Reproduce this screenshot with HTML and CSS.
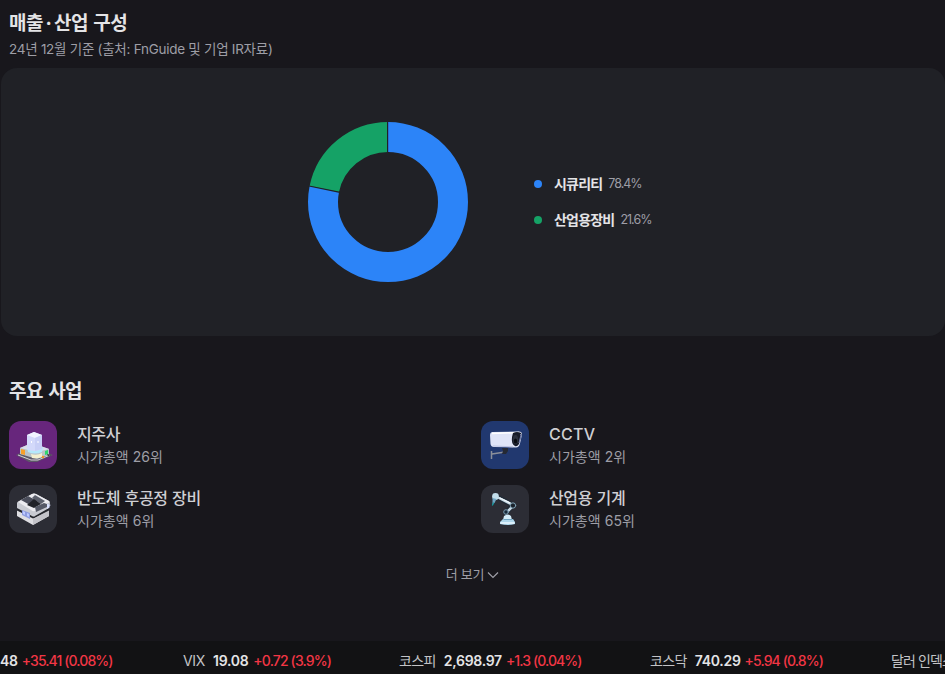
FILE: index.html
```html
<!DOCTYPE html>
<html lang="ko">
<head>
    <meta charset="UTF-8">
    <meta name="viewport" content="width=device-width, initial-scale=1.0">
    <title>매출·산업 구성</title>
    <link rel="stylesheet" href="styles.css">
</head>
<body>
<main>
    <section>
        <h2 class="title title-sales">매출<span class="mid">·</span>산업 구성</h2>
        <p class="source">24년 12월 기준 (출처: FnGuide 및 기업 IR자료)</p>
        <div class="chart-card">
            <svg class="donut" viewBox="0 0 160 160" width="160" height="160">
                <g fill="none" stroke-width="30" transform="rotate(-90 80 80)">
                    <circle cx="80" cy="80" r="65" stroke="#2c84f8" pathLength="1000" stroke-dasharray="782 218"/>
                    <circle cx="80" cy="80" r="65" stroke="#15a266" pathLength="1000" stroke-dasharray="218 782" stroke-dashoffset="-782"/>
                </g>
                <path d="M79.600 0v31M1 64l31 6.400" stroke="#202127" stroke-width="1.200"/>
            </svg>
            <ul class="legend">
                <li><i class="dot blue"></i><b>시큐리티</b><span>78.4%</span></li>
                <li><i class="dot green"></i><b>산업용장비</b><span>21.6%</span></li>
            </ul>
        </div>
    </section>

    <section class="business">
        <h2 class="title title-business">주요 사업</h2>
        <ul class="grid">
            <li class="item">
                <div class="icon purple">
                    <svg viewBox="0 0 48 48" width="48" height="48">
                        <path d="M7 34l17-8 20 8-16 7h-8z" fill="#5d5968"/>
                        <path d="M9 34l13 5h7l12-5" fill="none" stroke="#d4d0d6"/>
                        <path d="M11 27l12-5 17 6v6l-12 4-17-5z" fill="#b9c3c8"/>
                        <path d="M11 27l12-5 17 6-12 3z" fill="#d8dfeb"/>
                        <path d="M18 26q8 5 16 0l-1 5q-7 3-14 0z" fill="#b4e9fb"/>
                        <path d="M18 14l7-3 8 3v14q-8 4-15 0z" fill="#d3d9fa"/>
                        <path d="M18 14l7-3 8 3-7 3z" fill="#f1f4ff"/>
                        <path d="M26 17l7-3v14l-7 2z" fill="#c8cff6"/>
                        <path d="M22.500 20v2M29 20v2" stroke="#fff"/>
                        <path d="M12 28l4 1v5l-4-1z" fill="#f7a029"/>
                        <path d="M22 33q6 2 11-1v4q-5 2-10 1z" fill="#f3f0cf"/>
                        <path d="M36 30l3-1v4l-3 1z" fill="#2fd66d"/>
                        <path d="M38 33l4 1-3 1z" fill="#232028"/>
                        <circle cx="34" cy="36" r="1.200" fill="#f29423"/>
                    </svg>
                </div>
                <div class="text">
                    <strong>지주사</strong>
                    <span>시가총액 26위</span>
                </div>
            </li>
            <li class="item">
                <div class="icon navy">
                    <svg viewBox="0 0 48 48" width="48" height="48">
                        <path d="M10.500 30v8M11 33l13-2" fill="none" stroke="#8b8f9a" stroke-width="1.500"/>
                        <path d="M21 27h6v3l-2 3h-4l1-3z" fill="#252934"/>
                        <path d="M11 11l27-.5q3 0 3 3l-2 9q-1 4-4 4l-22-.5q-3 0-3.500-3l-.5-9q0-2.500 2-3z" fill="#dfe4f7"/>
                        <path d="M11 12.500l27-1" stroke="#fff" stroke-width="1.500"/>
                        <path d="M32 12q4-2 8 0 1 1 0 4l-2 7q-2 3-4 2-4-2-3-9z" fill="#171b29"/>
                        <path d="M39 13l1 1-2 8" fill="none" stroke="#7784b5"/>
                        <ellipse cx="34.500" cy="18.500" rx="2.700" ry="4.500" fill="#2a2f3d"/>
                        <ellipse cx="34.500" cy="20" rx="1.700" ry="2.500" fill="#080b12"/>
                        <path d="M12 25l20 .8" stroke="#b9c0df"/>
                    </svg>
                </div>
                <div class="text">
                    <strong class="latin">CCTV</strong>
                    <span>시가총액 2위</span>
                </div>
            </li>
            <li class="item">
                <div class="icon">
                    <svg viewBox="0 0 48 48" width="48" height="48">
                        <path d="M8 25l17 8 15-8v6l-16 9-16-9z" fill="#dedee2"/>
                        <path d="M24 34l16-9v6l-16 9z" fill="#c3c3c9"/>
                        <path d="M8 23l17 8 15-8v2.500l-16 8-16-8z" fill="#24262c"/>
                        <path d="M8 18q0-1 2-2l13-7q2-1 4 0l13 7q1 1 1 2l-1 5-14 8q-1 1-3 0L8 23z" fill="#c9cbd2"/>
                        <path d="M9 17l14-8q2-1 4 0l13 7q1 1-1 2l-13 8q-2 1-4-1z" fill="#ececf0"/>
                        <path d="M12 15l7-4 9 5-7 4z" fill="#4a4d5a"/>
                        <path d="M26 10l10 6-4 3-9-6z" fill="#5c606c"/>
                        <path d="M18 20l7-6 7 5-7 4z" fill="#202228"/>
                        <path d="M26 22l9-4 3 1v3l-11 5z" fill="#555966"/>
                        <path d="M38 19l4 1-2 1 1 1-3 2z" fill="#d9e1ff"/>
                        <path d="M13 25l8 3v6l-8-4z" fill="#8e9ce0"/>
                        <path d="M14 26l2 1v3l-2-1zM18 28l2 1v3l-2-1z" fill="#becaff"/>
                    </svg>
                </div>
                <div class="text">
                    <strong>반도체 후공정 장비</strong>
                    <span>시가총액 6위</span>
                </div>
            </li>
            <li class="item">
                <div class="icon">
                    <svg viewBox="0 0 48 48" width="48" height="48" stroke-linecap="round" stroke-linejoin="round">
                        <path d="M16 12l16 8-7 8" fill="none" stroke="#202a35" stroke-width="5"/>
                        <path d="M18 13l12 6M31 22l-6 6" fill="none" stroke="#c5d7e3" stroke-width="2.500"/>
                        <path d="M19 13l10 5" stroke="#f1f8fc" stroke-width="1.200"/>
                        <circle cx="32" cy="20.500" r="2.700" fill="#1a222b" stroke="#82a4b7"/>
                        <circle cx="14.500" cy="11.500" r="3.400" fill="#c2ddeb"/>
                        <path d="M11.500 13l4 1-2 4-2 1z" fill="#70a6c4"/>
                        <path d="M12.500 18l-1 2" stroke="#169ba0" stroke-width="1.300"/>
                        <circle cx="25" cy="27" r="2.300" fill="#172a3b" stroke="#7b9bb0"/>
                        <path d="M23 31q4-3 7 0l1 4h-9z" fill="#d4edfa"/>
                        <path d="M19 37l3-3h10l2 3v2q-7 2-15 0z" fill="#afd7ec"/>
                        <path d="M20 38h13" stroke="#ecf8ff" stroke-width="1.300"/>
                        <path d="M23 34.500h8" stroke="#70a6c4"/>
                    </svg>
                </div>
                <div class="text">
                    <strong>산업용 기계</strong>
                    <span>시가총액 65위</span>
                </div>
            </li>
        </ul>
        <button class="more">더 보기
            <svg width="12" height="8" viewBox="0 0 12 8"><path d="M1 1.500l5 5 5-5" fill="none" stroke="currentColor" stroke-width="1.200"/></svg>
        </button>
    </section>
</main>

<footer class="ticker">
    <div class="quote first"><b>48</b><em>+35.41 (0.08%)</em></div>
    <div class="quote vix"><span>VIX</span><b>19.08</b><em>+0.72 (3.9%)</em></div>
    <div class="quote kospi"><span>코스피</span><b>2,698.97</b><em>+1.3 (0.04%)</em></div>
    <div class="quote kosdaq"><span>코스닥</span><b>740.29</b><em>+5.94 (0.8%)</em></div>
    <div class="quote dollar"><span>달러 인덱스</span></div>
</footer>
</body>
</html>
```
FILE: styles.css
```css
* {
    box-sizing: border-box;
}
body {
    margin: 0;
    height: 674px;
    overflow: hidden;
    display: flex;
    flex-direction: column;
    background: #18171c;
    color: #e4e4e6;
    font-family: Inter, "Noto Sans CJK KR", sans-serif;
    font-size: 14px;
}
main {
    flex: 1;
}
ul {
    list-style: none;
    margin: 0;
    padding: 0;
}
.title {
    margin: 0;
    padding-left: 9px;
    font-size: 19px;
    line-height: 28px;
    font-weight: 700;
    letter-spacing: -0.6px;
    word-spacing: 1.5px;
}
.title-sales {
    padding-top: 10px;
}
.mid {
    margin: 0 2.8px;
}
.source {
    margin: 1px 0 9px;
    padding-left: 9px;
    height: 20px;
    color: #9e9ea6;
    font-size: 13.5px;
    line-height: 20px;
    letter-spacing: -0.27px;
}
.chart-card {
    display: flex;
    align-items: center;
    height: 268px;
    margin-left: 1px;
    padding-left: 307px;
    border-radius: 16px;
    background: #202126;
}
.legend {
    display: flex;
    flex-direction: column;
    gap: 16px;
    margin-left: 66px;
}
.legend li {
    display: flex;
    align-items: center;
    height: 20px;
    line-height: 20px;
}
.dot {
    width: 8px;
    height: 8px;
    margin-right: 12px;
    border-radius: 50%;
}
.blue {
    background: #2c84f8;
}
.green {
    background: #15a266;
}
.legend b {
    font-size: 14px;
    letter-spacing: -0.8px;
}
.legend span {
    margin-left: 6px;
    color: #9e9ea6;
    font-size: 12.5px;
    letter-spacing: -1px;
}
.business {
    padding-top: 42px;
}
.grid {
    display: grid;
    grid-template-columns: 472px 472px;
    gap: 16px 0;
    padding: 15px 0 0 9px;
}
.item {
    display: flex;
    gap: 20px;
    height: 48px;
}
.icon {
    width: 48px;
    height: 48px;
    border-radius: 12px;
    overflow: hidden;
    background: #2c2d35;
}
.icon.purple {
    background: #67267c;
}
.icon.navy {
    background: #21386f;
}
.icon svg {
    display: block;
}
.text {
    display: flex;
    flex-direction: column;
}
.text strong {
    height: 24px;
    font-size: 16px;
    line-height: 27px;
    font-weight: 500;
    color: #cfcfd3;
    letter-spacing: -0.35px;
    word-spacing: 0.5px;
}
.text .latin {
    letter-spacing: 0.3px;
}
.text span {
    height: 22px;
    font-size: 14px;
    line-height: 23px;
    color: #9e9ea6;
    letter-spacing: 0;
    word-spacing: 0.3px;
}
.more {
    display: flex;
    align-items: center;
    gap: 3px;
    margin: 30px auto 0;
    padding: 0;
    height: 20px;
    border: 0;
    background: none;
    color: #9e9ea6;
    font-family: inherit;
    font-size: 13px;
    letter-spacing: -0.3px;
    cursor: pointer;
}
.more svg {
    margin-top: 3px;
}
.ticker {
    display: flex;
    height: 33px;
    padding-top: 6px;
    background: #121214;
    overflow: hidden;
    white-space: nowrap;
    line-height: 28px;
}
.quote {
    flex: none;
    display: flex;
}
.quote span {
    margin-right: 8px;
    color: #c3c3c6;
    letter-spacing: -0.6px;
}
.quote b {
    font-weight: 600;
    letter-spacing: -0.3px;
}
.quote em {
    margin-left: 4px;
    color: #f23645;
    font-style: normal;
    font-weight: 500;
    letter-spacing: -0.9px;
}
.first {
    width: 183px;
}
.vix {
    width: 216px;
}
.vix span {
    letter-spacing: -0.3px;
}
.vix em {
    margin-left: 5px;
    letter-spacing: -0.85px;
}
.kospi {
    width: 251px;
}
.kosdaq {
    width: 241px;
}
.dollar span {
    letter-spacing: -0.9px;
}
```
